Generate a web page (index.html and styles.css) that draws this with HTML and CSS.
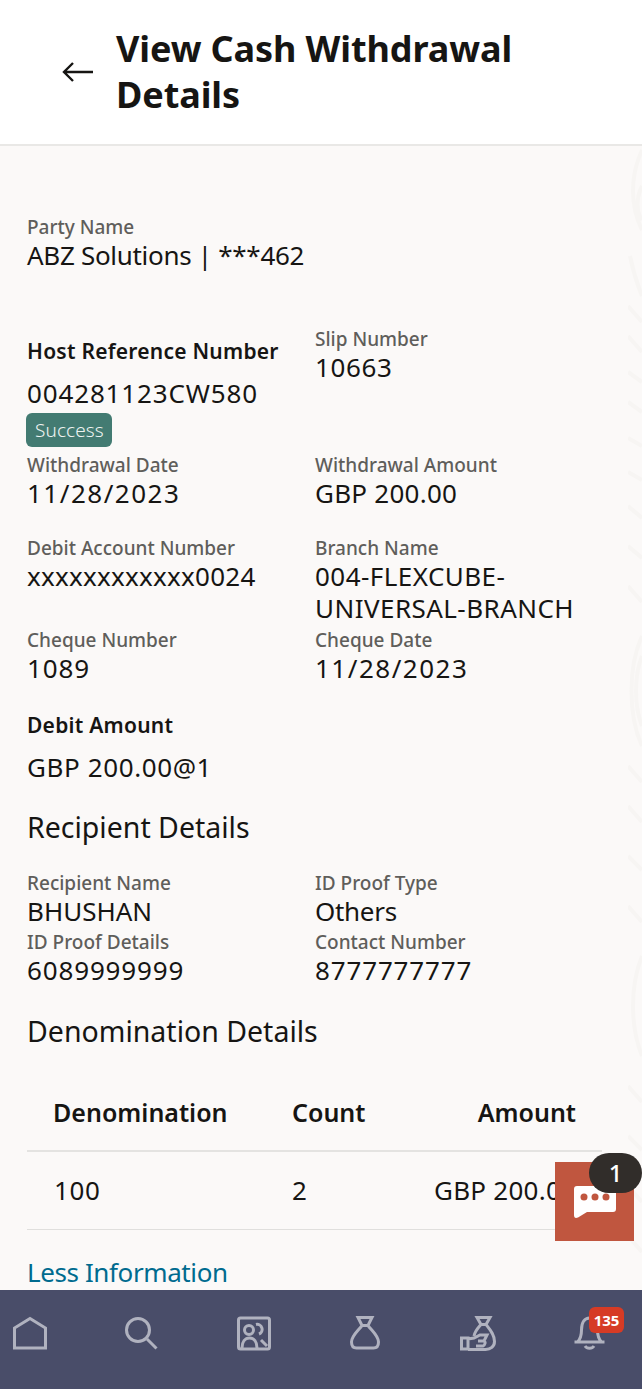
FILE: index.html
```html
<!DOCTYPE html>
<html lang="en">
<head>
    <meta charset="UTF-8">
    <meta name="viewport" content="width=device-width, initial-scale=1.0">
    <title>View Cash Withdrawal Details</title>
    <link rel="stylesheet" href="styles.css">
</head>
<body>
    <header class="page-header">
        <svg class="back-icon" width="34" height="24" viewBox="0 0 34 24" fill="none" stroke="#161513" stroke-width="2.4">
            <path d="M32 12H3M12 3l-9 9 9 9"/>
        </svg>
        <h1>View Cash Withdrawal Details</h1>
    </header>

    <main class="content">
        <svg class="side-pattern" width="14" height="1144" viewBox="0 0 14 1144" fill="none" stroke="#f7f5f3" stroke-width="4">
            <path d="M14 4C2 30 2 60 14 84M14 40C8 52 8 66 14 74M2 110C6 130 10 140 14 150M0 160L14 176M0 190L14 206M0 226L14 236M0 256L14 266M0 292L14 300M0 326L14 334M0 360L14 372M0 400L14 412M0 440L14 456M14 490C0 520 0 570 14 600M14 510C6 530 6 560 14 580M0 620L14 636M0 660L14 676M0 710L14 724M0 760L14 776M14 810C2 840 2 880 14 910M0 940L14 956M0 990L14 1004M0 1040L14 1056M0 1090L14 1106"/>
        </svg>

        <div class="field party">
            <span class="label">Party Name</span>
            <span class="value text">ABZ Solutions | ***462</span>
        </div>

        <div class="detail-grid">
            <div class="field host">
                <span class="label strong">Host Reference Number</span>
                <span class="value num">004281123CW580</span>
                <span class="badge">Success</span>
            </div>
            <div class="field">
                <span class="label">Slip Number</span>
                <span class="value slip">10663</span>
            </div>
            <div class="field spaced">
                <span class="label">Withdrawal Date</span>
                <span class="value date">11/28/2023</span>
            </div>
            <div class="field spaced">
                <span class="label">Withdrawal Amount</span>
                <span class="value slight">GBP 200.00</span>
            </div>
            <div class="field">
                <span class="label">Debit Account Number</span>
                <span class="value slight">xxxxxxxxxxxx0024</span>
            </div>
            <div class="field">
                <span class="label">Branch Name</span>
                <span class="value branch">004-FLEXCUBE-UNIVERSAL-BRANCH</span>
            </div>
            <div class="field">
                <span class="label">Cheque Number</span>
                <span class="value num">1089</span>
            </div>
            <div class="field">
                <span class="label">Cheque Date</span>
                <span class="value date">11/28/2023</span>
            </div>
        </div>

        <div class="field debit">
            <span class="label strong">Debit Amount</span>
            <span class="value slip">GBP 200.00@1</span>
        </div>

        <h2 class="section-title recipient">Recipient Details</h2>
        <div class="detail-grid tight">
            <div class="field">
                <span class="label">Recipient Name</span>
                <span class="value">BHUSHAN</span>
            </div>
            <div class="field">
                <span class="label">ID Proof Type</span>
                <span class="value text">Others</span>
            </div>
            <div class="field">
                <span class="label">ID Proof Details</span>
                <span class="value num">6089999999</span>
            </div>
            <div class="field">
                <span class="label">Contact Number</span>
                <span class="value num">8777777777</span>
            </div>
        </div>

        <h2 class="section-title denomination">Denomination Details</h2>
        <table class="denomination-table">
            <thead>
                <tr>
                    <th class="col-name">Denomination</th>
                    <th class="col-count">Count</th>
                    <th class="col-amount">Amount</th>
                </tr>
            </thead>
            <tbody>
                <tr>
                    <td class="col-name">100</td>
                    <td class="col-count">2</td>
                    <td class="col-amount">GBP 200.00</td>
                </tr>
            </tbody>
        </table>

        <a class="less-link" href="#">Less Information</a>

        <div class="chat-button">
            <svg width="42" height="32" viewBox="0 0 42 32">
                <path d="M3 0h36a3 3 0 0 1 3 3v20a3 3 0 0 1-3 3H13l-9 5.500Q0 33 0 29V3a3 3 0 0 1 3-3z" fill="#fff"/>
                <circle cx="10" cy="11" r="3.5" fill="#c0563f"/>
                <circle cx="21" cy="11" r="3.5" fill="#c0563f"/>
                <circle cx="32" cy="11" r="3.5" fill="#c0563f"/>
            </svg>
            <span class="chat-count">1</span>
        </div>
    </main>

    <nav class="bottom-nav">
        <svg class="nav-icon" width="36" height="36" viewBox="0 0 36 36" fill="none" stroke="#b0b2bf" stroke-width="3">
            <path d="M2.500 33V13L18 3.500 33.500 13v20z"/>
        </svg>
        <svg class="nav-icon" width="36" height="36" viewBox="0 0 36 36" fill="none" stroke="#b0b2bf" stroke-width="3">
            <circle cx="14" cy="15" r="11.500"/>
            <path d="M23 24l9.500 9.500"/>
        </svg>
        <svg class="nav-icon" width="36" height="36" viewBox="0 0 36 36" fill="none" stroke="#b0b2bf" stroke-width="3">
            <rect x="2.500" y="3" width="31" height="31" rx="2"/>
            <circle cx="13" cy="15" r="4.500"/>
            <path d="M6 33c0-6 3-10 7.500-10s7.500 4 7.500 10M20 9.500a5 5 0 0 1 3 9.500M25 25l6 6"/>
        </svg>
        <svg class="nav-icon" width="36" height="36" viewBox="0 0 36 36" fill="none" stroke="#b0b2bf" stroke-width="3">
            <path d="M10 2.500h14l-4 8h-6zM14 10.500C10 16 3.500 21 3.500 27c0 4 2 6 5 6h17c3 0 5-2 5-6 0-6-6.500-11-10.500-16.500"/>
        </svg>
        <svg class="nav-icon" width="36" height="36" viewBox="0 0 36 36" fill="none" stroke="#b0b2bf" stroke-width="3">
            <path d="M17 2.500h13l-4 7h-5zM21 9.500C18 13 15 16 14 21M26 9.500c4 5 8.500 10 8.500 17 0 5-4 8-9 8H8"/>
            <path d="M1.500 23h6.500v11H1.500zM8 24l6-1 6-3h7l-3 6h-6M24 26c2 1 1 4-1 5h-7"/>
        </svg>
        <div class="nav-bell">
            <svg class="nav-icon" width="36" height="36" viewBox="0 0 36 36" fill="none" stroke="#b0b2bf" stroke-width="3">
                <path d="M2.500 27h30M5.500 27c3-3 4-6 4-12 0-8 3.500-12 8-12s8 4 8 12c0 6 1 9 4 12M13 31c2 3 7 3 9 0"/>
            </svg>
            <span class="nav-badge">135</span>
        </div>
    </nav>
</body>
</html>
```

FILE: styles.css
```css
body {
    font-family: "Noto Sans", "Open Sans", Arial, sans-serif;
    display: flex;
    flex-direction: column;
    height: 1389px;
    margin: 0;
    overflow: hidden;
    background-color: #fbf9f8;
    color: #161513;
}
.page-header {
    display: flex;
    align-items: center;
    flex-shrink: 0;
    box-sizing: border-box;
    height: 146px;
    padding-left: 61px;
    background-color: #fff;
    border-bottom: 2px solid #e9e8e6;
}
.back-icon {
    flex-shrink: 0;
    margin-right: 21px;
}
.page-header h1 {
    width: 440px;
    margin: 0;
    font-size: 36px;
    line-height: 46px;
    font-weight: 700;
    letter-spacing: -0.1px;
}
.content {
    position: relative;
    flex: 1;
    overflow: hidden;
    padding: 69px 0 0 27px;
}
.side-pattern {
    position: absolute;
    top: 0;
    right: 0;
}
.field {
    display: flex;
    flex-direction: column;
    align-items: flex-start;
}
.label {
    font-size: 19px;
    line-height: 24px;
    font-weight: 500;
    color: #5f5e5b;
}
.label.strong {
    font-size: 21px;
    color: #161513;
    font-weight: 600;
    letter-spacing: 0.25px;
}
.value {
    font-size: 26px;
    line-height: 32px;
}
.value.text {
    letter-spacing: -0.3px;
}
.value.num {
    letter-spacing: 0.85px;
}
.value.slip {
    letter-spacing: 0.6px;
}
.value.date {
    letter-spacing: 1.5px;
}
.value.slight {
    letter-spacing: 0.25px;
}
.value.branch {
    letter-spacing: 0.45px;
}
.party {
    margin-bottom: 56px;
}
.detail-grid {
    display: grid;
    grid-template-columns: 288px 288px;
    row-gap: 4px;
}
.detail-grid.tight {
    row-gap: 3px;
}
.host .label {
    margin: 12px 0 14px;
}
.badge {
    margin-top: 4px;
    margin-left: -1px;
    padding: 0 8px 0 9px;
    height: 34px;
    line-height: 34px;
    font-size: 19px;
    font-weight: 300;
    letter-spacing: 0.1px;
    color: #eef3f1;
    background-color: #437b72;
    border-radius: 6px;
}
.spaced {
    margin: 2px 0 23px;
}
.debit {
    margin-top: 29px;
}
.debit .label {
    margin-bottom: 14px;
}
.section-title {
    margin: 0;
    font-size: 28.5px;
    line-height: 38px;
    font-weight: 400;
}
.recipient {
    margin: 25px 0 25px;
}
.denomination {
    margin: 26px 0 40px;
}
.denomination-table {
    width: 575px;
    border-collapse: collapse;
    table-layout: fixed;
}
.denomination-table th {
    height: 44px;
    padding: 0 0 16px;
    font-size: 25px;
    font-weight: 600;
    text-align: left;
    border-bottom: 2px solid #e4e3e1;
}
.denomination-table td {
    height: 76px;
    padding: 0 0 1px;
    font-size: 26px;
    white-space: nowrap;
    border-bottom: 1px solid #e0dfdd;
}
.denomination-table .col-name {
    width: 239px;
    padding-left: 26px;
}
.denomination-table td.col-name {
    padding-left: 27px;
    letter-spacing: 0.6px;
}
.denomination-table .col-count {
    width: 142px;
}
.denomination-table .col-amount {
    text-align: right;
    padding-right: 26px;
}
.denomination-table td.col-amount {
    letter-spacing: 0.25px;
}
.less-link {
    display: block;
    margin-top: 26px;
    font-size: 26px;
    line-height: 32px;
    letter-spacing: -0.4px;
    color: #006b8f;
    text-decoration: none;
}
.chat-button {
    position: absolute;
    left: 555px;
    top: 1016px;
    display: flex;
    align-items: center;
    justify-content: center;
    width: 79px;
    height: 79px;
    background-color: #c0563f;
}
.chat-count {
    position: absolute;
    top: -9px;
    left: 34px;
    width: 53px;
    height: 40px;
    border-radius: 20px;
    background-color: #312d2a;
    color: #fff;
    font-size: 24px;
    line-height: 40px;
    font-weight: 500;
    text-align: center;
}
.bottom-nav {
    display: flex;
    align-items: flex-start;
    gap: 76px;
    flex-shrink: 0;
    box-sizing: border-box;
    height: 99px;
    padding: 25px 0 0 12px;
    background-color: #494d69;
}
.nav-bell {
    position: relative;
    width: 36px;
    height: 36px;
}
.nav-badge {
    position: absolute;
    top: -8px;
    left: 17px;
    width: 35px;
    height: 26px;
    border-radius: 6px;
    background-color: #d63b25;
    color: #fff;
    font-size: 15px;
    line-height: 26px;
    font-weight: 700;
    text-align: center;
}
```
